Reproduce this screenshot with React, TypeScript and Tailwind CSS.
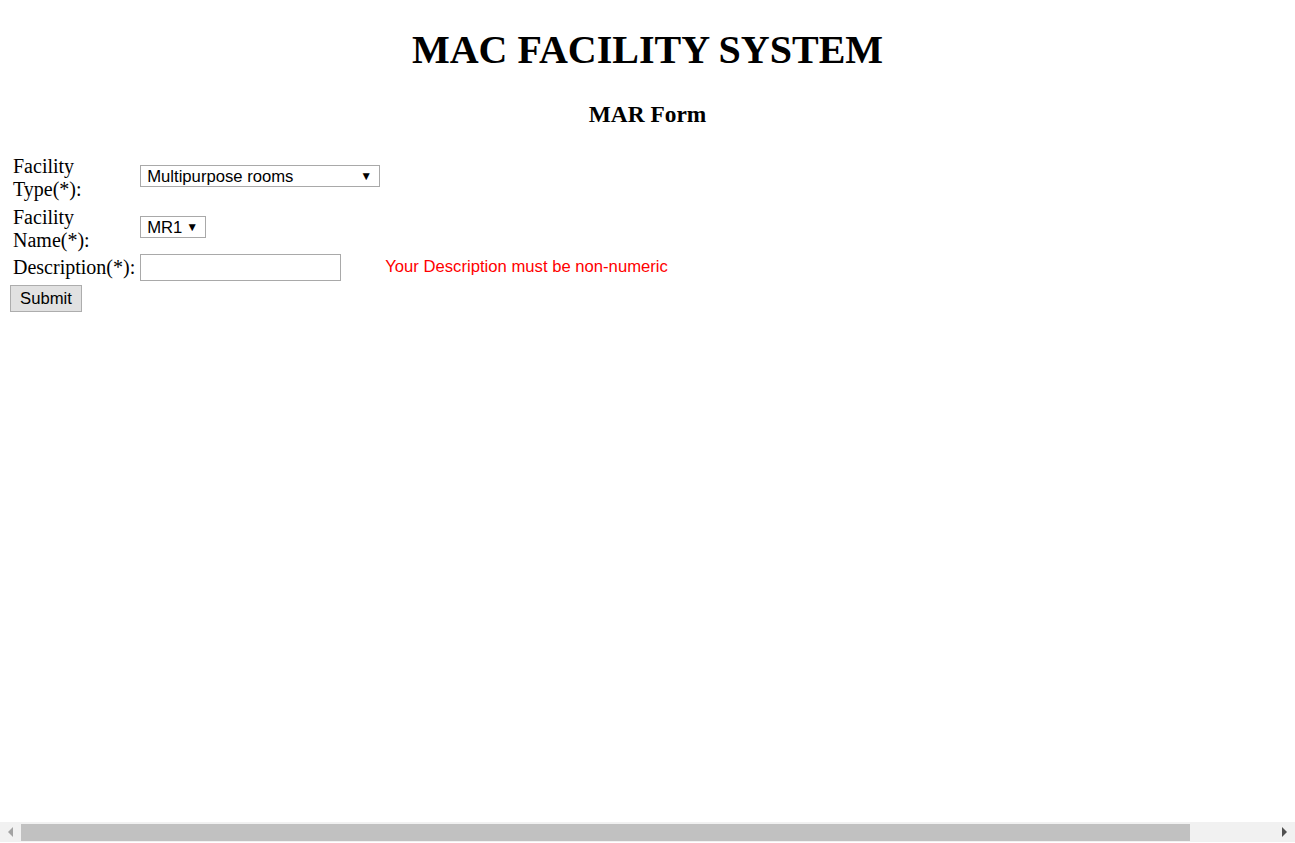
export default function App() {
  return (
    <div className="flex h-screen flex-col bg-white text-black">
      <div className="flex-1 overflow-hidden px-[10px] font-['Liberation_Serif',serif]">
        {/* Headings */}
        <h1 className="mt-[27px] text-center text-[40px] font-bold leading-[46px]">MAC FACILITY SYSTEM</h1>
        <h3 className="mt-[28px] text-center text-[23.4px] font-bold leading-[27px]">MAR Form</h3>

        {/* Form table */}
        <form className="mt-[21px]">
          <div className="grid w-fit grid-cols-[auto_auto_auto] items-center gap-[2.5px] py-[2.5px] pl-[1.5px] text-[20px] leading-[23px]">
            <div className="w-[124px] translate-y-[2px] p-[1.25px] pl-[1.5px]">Facility Type(*):</div>
            <div className="p-[1.25px]">
              <FakeSelect value="Multipurpose rooms" width="w-[240px]" />
            </div>
            <div />

            <div className="w-[124px] translate-y-[2px] p-[1.25px] pl-[1.5px]">Facility Name(*):</div>
            <div className="p-[1.25px]">
              <FakeSelect value="MR1" width="w-[66px]" />
            </div>
            <div />

            <div className="-mt-[1px] p-[1.25px] pl-[1.5px] whitespace-nowrap">Description(*):</div>
            <div className="-mt-[1px] w-[240px] p-[1.25px]">
              <input
                type="text"
                className="block h-[27px] w-[201px] border border-[#a9a9a9] bg-white px-1 font-['Liberation_Sans',Arial,sans-serif] text-[16.67px] outline-none"
              />
            </div>
            <div className="-mt-[2px] p-[1.25px] font-['Liberation_Sans',Arial,sans-serif] text-[16.67px] text-[#ff0000]">
              Your Description must be non-numeric
            </div>
          </div>

          <button
            type="button"
            className="h-[27px] w-[72px] border border-[#adadad] bg-[#e1e1e1] pt-[2px] font-['Liberation_Sans',Arial,sans-serif] text-[16.67px] leading-none text-black"
          >
            Submit
          </button>
        </form>
      </div>

      {/* horizontal scrollbar */}
      <div className="mb-[1px] flex h-[20px] items-center bg-[#f1f1f1]">
        <div className="flex w-[21px] items-center justify-center">
          <svg width="6" height="10" viewBox="0 0 6 10">
            <path d="M5 0 L0 5 L5 10 Z" fill="#a3a3a3" />
          </svg>
        </div>
        <div className="h-[17px] w-[1169px] bg-[#c1c1c1]" />
        <div className="flex-1" />
        <div className="flex w-[21px] items-center justify-center">
          <svg width="6" height="10" viewBox="0 0 6 10">
            <path d="M0 0 L5 5 L0 10 Z" fill="#505050" />
          </svg>
        </div>
      </div>
    </div>
  );
}

function FakeSelect({ value, width }: { value: string; width: string }) {
  return (
    <div
      className={`${width} flex h-[22px] items-center justify-between border border-[#a9a9a9] bg-white pl-[6px] pr-[7px] pt-[3px] font-['Liberation_Sans',Arial,sans-serif] text-[16.67px] leading-none`}
    >
      <span>{value}</span>
      <span className="-mt-[2px] text-[12px]">▼</span>
    </div>
  );
}
